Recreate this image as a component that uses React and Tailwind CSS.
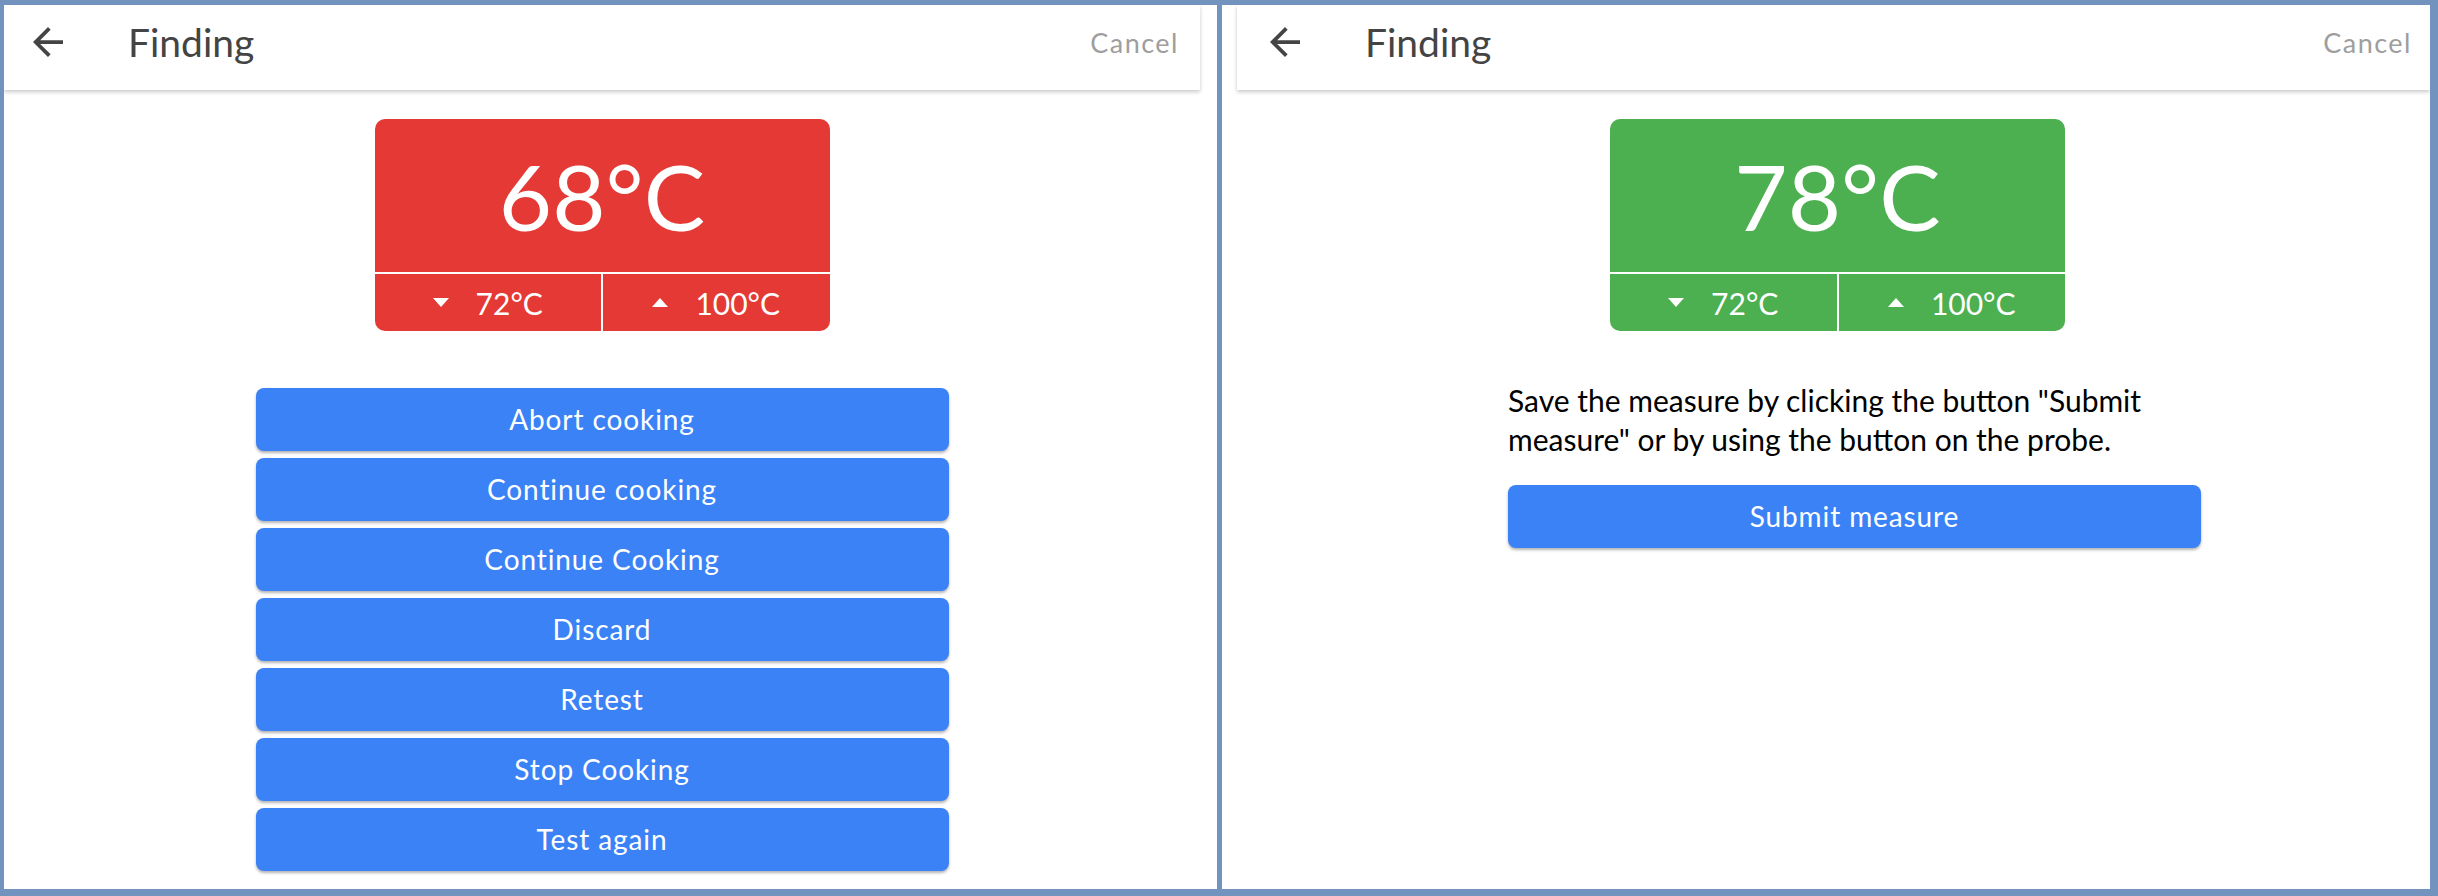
import React from "react";

const font = { fontFamily: "Lato, 'Noto Sans', sans-serif" };

function BackArrow() {
  return (
    <svg viewBox="4 4 16 16" className="w-[30px] h-[30px] shrink-0" fill="#444444">
      <path d="M20 11H7.83l5.59-5.59L12 4l-8 8 8 8 1.41-1.41L7.83 13H20v-2z" />
    </svg>
  );
}

function Down() {
  return (
    <svg viewBox="0 0 16 9" className="w-[16px] h-[9px]" fill="white">
      <polygon points="0,0 16,0 8,9" />
    </svg>
  );
}

function Up() {
  return (
    <svg viewBox="0 0 16 9" className="w-[16px] h-[9px]" fill="white">
      <polygon points="0,9 16,9 8,0" />
    </svg>
  );
}

function Header({ arrowMl, pr }) {
  return (
    <div className={`h-[85px] pb-[11px] flex items-center bg-white shadow-[0_2px_4px_rgba(0,0,0,0.22)] relative z-10 ${pr}`}>
      <div className={arrowMl}>
        <BackArrow />
      </div>
      <div className="ml-[65px] text-[39px] text-[#444444] leading-none">Finding</div>
      <div className="ml-auto text-[27px] tracking-[1.5px] text-[#9e9e9e] leading-none">Cancel</div>
    </div>
  );
}

function TempBox({ value, color }) {
  return (
    <div className={`w-[455px] rounded-[10px] overflow-hidden text-white ${color}`}>
      <div className="h-[153px] flex items-center justify-center text-[92px] leading-none">
        {value}
      </div>
      <div className="h-[2px] bg-white" />
      <div className="h-[57px] flex">
        <div className="flex-1 flex items-center justify-center gap-[27px] border-r-2 border-white">
          <Down />
          <span className="text-[30px] leading-none">72°C</span>
        </div>
        <div className="flex-1 flex items-center justify-center gap-[27px]">
          <Up />
          <span className="text-[30px] leading-none">100°C</span>
        </div>
      </div>
    </div>
  );
}

function Btn({ children }) {
  return (
    <div className="h-[63px] w-[693px] pb-[2px] rounded-[8px] bg-[#3b82f6] text-white flex items-center justify-center text-[28px] tracking-[0.9px] shadow-[0_2px_3px_rgba(0,0,0,0.3)]">
      {children}
    </div>
  );
}

export default function App() {
  const buttons = [
    "Abort cooking",
    "Continue cooking",
    "Continue Cooking",
    "Discard",
    "Retest",
    "Stop Cooking",
    "Test again",
  ];
  return (
    <div
      style={font}
      className="w-[2438px] h-[896px] bg-[#7193be] pt-[5px] pb-[7px] pl-[4px] pr-[8px] flex gap-[5px] overflow-hidden"
    >
      {/* Left panel */}
      <div className="w-[1213px] bg-white flex flex-col overflow-hidden">
        <div className="w-[1196px]">
          <Header arrowMl="ml-[29px]" pr="pr-[21px]" />
        </div>
        <div className="w-[1196px] flex flex-col items-center">
          <div className="mt-[29px]">
            <TempBox value="68°C" color="bg-[#e53935]" />
          </div>
          <div className="mt-[57px] flex flex-col gap-[7px]">
            {buttons.map((b) => (
              <Btn key={b}>{b}</Btn>
            ))}
          </div>
        </div>
      </div>

      {/* Right panel */}
      <div className="flex-1 bg-white flex flex-col overflow-hidden">
        <div className="ml-[15px]">
          <Header arrowMl="ml-[33px]" pr="pr-[18px]" />
        </div>
        <div className="ml-[20px] w-[1191px] flex flex-col items-center">
          <div className="mt-[29px]">
            <TempBox value="78°C" color="bg-[#4caf50]" />
          </div>
          <div className="self-start ml-[266px] w-[695px] flex flex-col">
            <p className="mt-[50px] text-[30px] leading-[39px] text-black">
              Save the measure by clicking the button "Submit measure" or by using the button on the probe.
            </p>
            <div className="mt-[26px]">
              <Btn>Submit measure</Btn>
            </div>
          </div>
        </div>
      </div>
    </div>
  );
}
